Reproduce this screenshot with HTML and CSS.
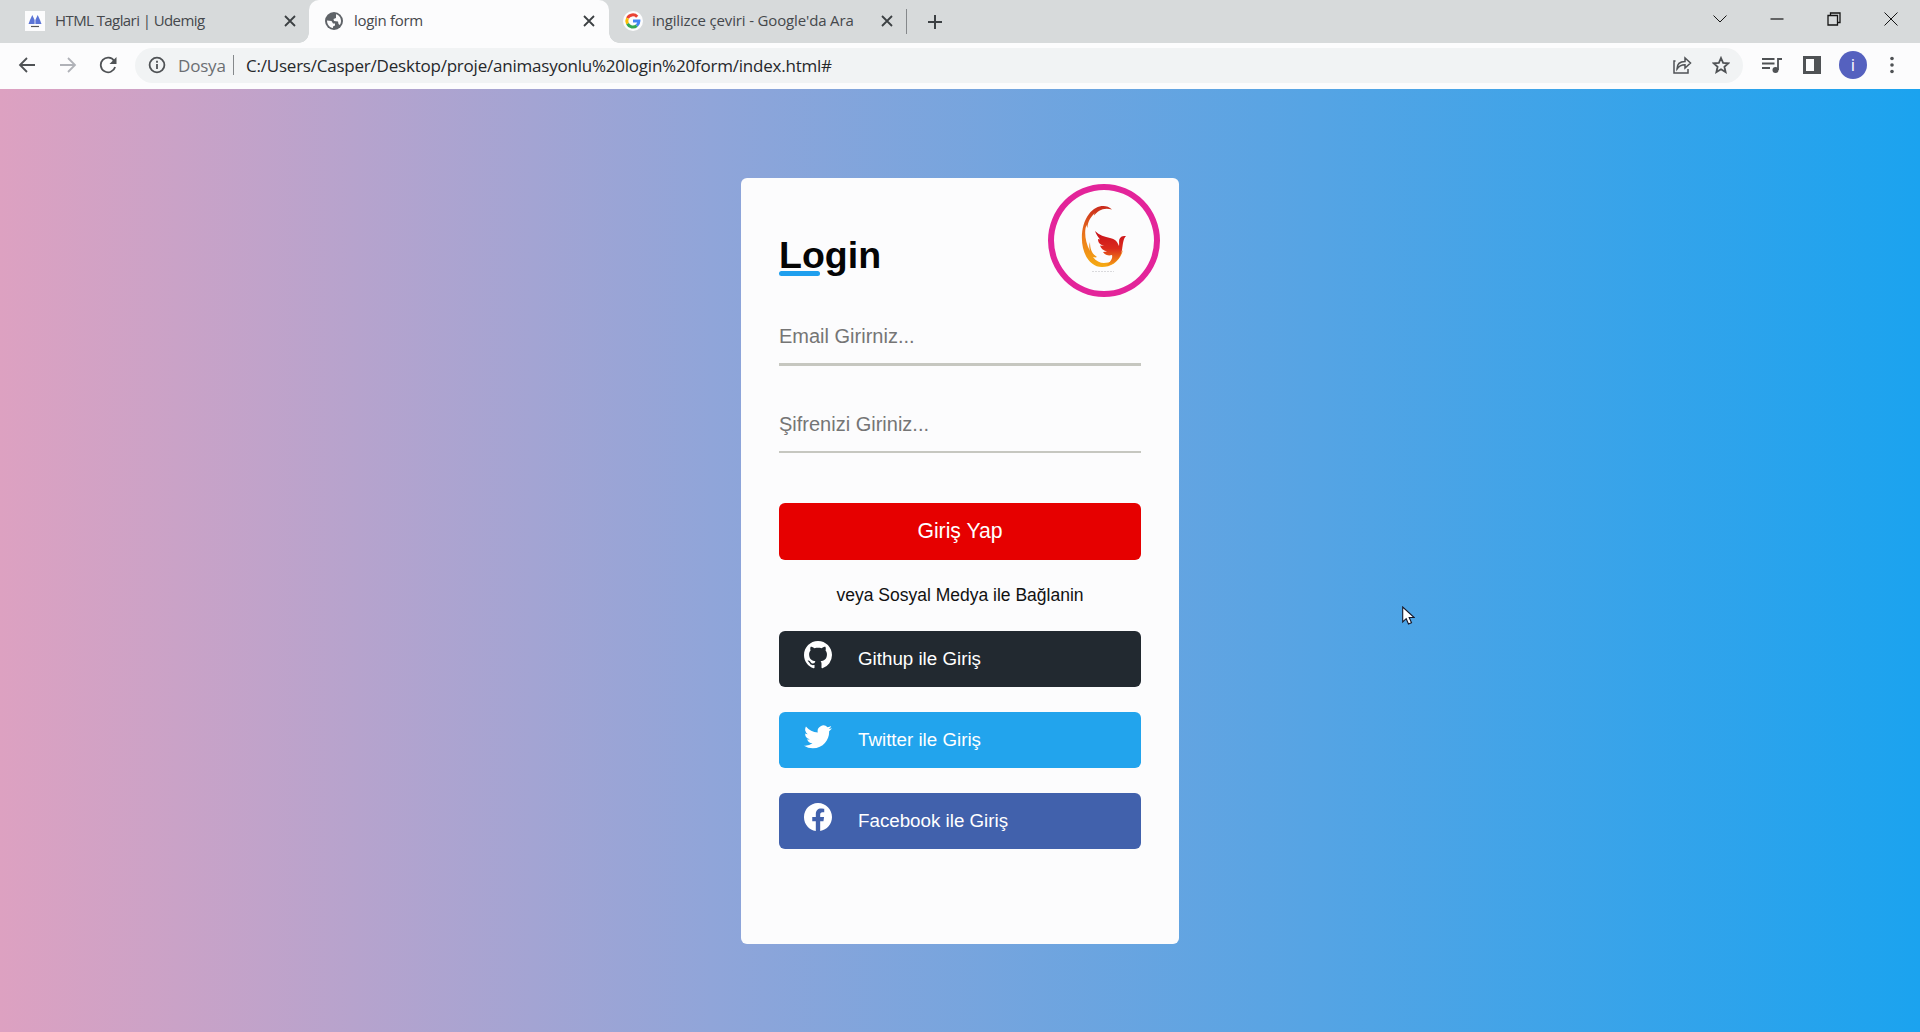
FILE: index.html
```html
<!DOCTYPE html>
<html lang="tr">
<head>
<meta charset="utf-8">
<title>login form</title>
<link rel="stylesheet" href="styles.css">
</head>
<body>
<header class="tabs">
  <div class="tab tab-first">
    <svg class="fav" width="20" height="20" viewBox="0 0 20 20"><path fill="#fcfcfd" d="M0 0h20v20H0z"/><path fill="#5b74d6" d="M3.500 13 5 9l2.300-5L9.600 9v4zM10.400 13V9l2.300-5L15 9l1.500 4z"/><path stroke="#555" stroke-width="1.200" d="M6 15.500h8"/></svg>
    <span class="title t1">HTML Taglari | Udemig</span>
    <svg class="x" width="12" height="12" viewBox="0 0 12 12"><path d="m1 1 10 10M11 1 1 11"/></svg>
  </div>
  <div class="tab tab-active">
    <svg class="fav" width="18" height="18" viewBox="0 0 18 18"><circle cx="9" cy="9" r="9" fill="#5f6368"/><path fill="#fcfcfd" d="M2 8.500 6.500 9l1.500 2.500h2v2l-2 1v1.500C4.500 15.500 2 12.500 2 8.500zM11 2.300c3 .7 5 3.500 5 6.700 0 1.500-.5 3-1.300 4l-1.200-1-.5-2.500-4-.5-.5-2L11 6z"/></svg>
    <span class="title t2">login form</span>
    <svg class="x" width="12" height="12" viewBox="0 0 12 12"><path d="m1 1 10 10M11 1 1 11"/></svg>
  </div>
  <div class="tab tab-last">
    <svg class="fav" width="20" height="20" viewBox="0 0 20 20"><circle cx="10" cy="10" r="10" fill="#fcfcfd"/><g fill="none" stroke-width="3"><path stroke="#ea4335" d="M4.500 7.200A6 6 0 0 1 14.200 5.700"/><path stroke="#fbbc05" d="M4.500 7.200a6 6 0 0 0 0 5.600"/><path stroke="#34a853" d="M4.500 12.800a6 6 0 0 0 9.300 1.800"/><path stroke="#4285f4" d="M13.800 14.600A6 6 0 0 0 15.900 10H10"/></g></svg>
    <span class="title t3">ingilizce çeviri - Google'da Ara</span>
    <svg class="x" width="12" height="12" viewBox="0 0 12 12"><path d="m1 1 10 10M11 1 1 11"/></svg>
  </div>
  <svg class="plus" width="14" height="14" viewBox="0 0 14 14"><path d="M7 0v14M0 7h14"/></svg>
  <div class="window-buttons">
    <svg width="14" height="14" viewBox="0 0 14 14"><path d="m.5 3.500 6.500 6.500 6.500-6.500"/></svg>
    <svg width="14" height="14" viewBox="0 0 14 14"><path stroke-width="1.200" d="M.5 7h13"/></svg>
    <svg width="14" height="14" viewBox="0 0 14 14"><path stroke-width="1.300" d="M1 3.500h9.500V13H1zM3.500 3V1H13v9.500h-2"/></svg>
    <svg width="14" height="14" viewBox="0 0 14 14"><path d="m.5.500 13 13m0-13-13 13"/></svg>
  </div>
</header>
<nav class="toolbar">
  <svg class="back" width="18" height="18" viewBox="0 0 18 18"><path d="M17 9H2m7-7L2 9l7 7"/></svg>
  <svg class="forward" width="18" height="18" viewBox="0 0 18 18"><path d="M1 9h15M9 2l7 7-7 7"/></svg>
  <svg class="reload" width="18" height="18" viewBox="0 0 18 18"><path d="M15.200 5A7.300 7.300 0 1 0 16.100 11"/><path fill="#4f5255" stroke="none" d="M17.500 1v7h-7z"/></svg>
  <div class="address">
    <svg width="18" height="18" viewBox="0 0 18 18"><circle cx="9" cy="9" r="7.400"/><path d="M9 8v5M9 4.800v2"/></svg>
    <span class="scheme">Dosya</span><span class="bar"></span>
    <span class="url">C:/Users/Casper/Desktop/proje/animasyonlu%20login%20form/index.html#</span>
    <svg class="share" width="20" height="20" viewBox="0 0 20 20"><path d="M3.500 6H2v12h14v-4M5 14c0-5 3-7.500 8-7.500V3l5.500 5-5.500 5v-3.200c-3.500 0-6 1-8 4.200z"/></svg>
    <svg width="18" height="18" viewBox="0 0 18 18"><path d="m9 2 2.100 4.900 5.300.4-4 3.500 1.200 5.200L9 13.200 4.400 16l1.200-5.200-4-3.500 5.300-.4z"/></svg>
  </div>
  <svg class="media" width="20" height="18" viewBox="0 0 20 18"><path d="M0 3h12.500M0 7.500h12.500M0 12h8M16 14V3h4"/><circle cx="13.500" cy="14" r="3" fill="#4f5255" stroke="none"/></svg>
  <svg class="panel" width="18" height="18" viewBox="0 0 18 18"><path fill="#4f5255" stroke="none" d="M0 0h18v18H0zM3 3v12h8V3z" fill-rule="evenodd"/></svg>
  <span class="avatar">i</span>
  <svg class="more" width="4" height="18" viewBox="0 0 4 18"><g fill="#4f5255" stroke="none"><circle cx="2" cy="2.500" r="1.800"/><circle cx="2" cy="9" r="1.800"/><circle cx="2" cy="15.500" r="1.800"/></g></svg>
</nav>
<main class="page">
  <form class="card">
    <div class="logo">
      <svg width="50" height="70" viewBox="0 0 50 70">
        <defs>
          <linearGradient id="flame" x1="0" y1="0" x2="0" y2="1"><stop offset="0" stop-color="#c92a1d"/><stop offset=".5" stop-color="#ec7a1c"/><stop offset="1" stop-color="#f5ab12"/></linearGradient>
          <linearGradient id="bird" x1="0" y1="0" x2="0" y2="1"><stop offset="0" stop-color="#c8101c"/><stop offset=".5" stop-color="#db2a1c"/><stop offset="1" stop-color="#f59b14"/></linearGradient>
        </defs>
        <path fill="url(#flame)" d="M33 4.500C27-1 17 0 10 9 3 18 1.500 32 4 43c3 12 10 19 19 19 10 0 18-6 21-17-5 8-12 13-19 13-4 0-8-2-11-6 2 .5 3 .5 4 0-5-3-7-8-7-15-1 3-1 6 0 9C6 37 5 26 7.500 20c.3 1.500.5 2 1 3 0-6 3-11 7.500-15-1 1-1 2-1 2.500C19 6 24 2 33 4.500z"/>
        <path fill="url(#bird)" d="M16 26c4 4 10 6 15 7 5 1 7 3 9 8 .5-4-1-6 2-9 1-1 2-1 5-1-3 3-3 8-4 14-1 8-8 15-16 16 4-4 7-7 6-11-4 1-7 0-9-3l4-.5c-4-1-6-3-7-6l4 .5c-5-2-6-4-6-7l2 .5C19 32 17 29 16 26z"/>
        <path stroke="#d9d9dc" stroke-dasharray="2 1" d="M13 66.500h22"/>
      </svg>
    </div>
    <h1>Login</h1>
    <input class="focus" type="text" placeholder="Email Girirniz...">
    <input type="password" placeholder="Şifrenizi Giriniz...">
    <button type="button">Giriş Yap</button>
    <p><span>veya Sosyal Medya ile Bağlanin</span></p>
    <a class="social github"><svg width="28" height="28" viewBox="0 0 16 16"><path d="M8 0C3.580 0 0 3.580 0 8c0 3.540 2.290 6.530 5.470 7.590.4.070.55-.17.55-.38 0-.19-.01-.82-.01-1.490-2.010.37-2.530-.49-2.690-.94-.09-.23-.48-.94-.82-1.130-.28-.15-.68-.52-.01-.53.63-.01 1.080.58 1.230.82.72 1.210 1.870.87 2.330.66.07-.52.28-.87.51-1.070-1.780-.2-3.640-.89-3.640-3.950 0-.87.31-1.590.82-2.150-.08-.2-.36-1.020.08-2.120 0 0 .67-.21 2.200.82.64-.18 1.320-.27 2-.27s1.360.09 2 .27c1.530-1.040 2.200-.82 2.200-.82.44 1.100.16 1.920.08 2.120.51.56.82 1.270.82 2.150 0 3.070-1.870 3.750-3.650 3.950.29.25.54.73.54 1.480 0 1.070-.01 1.930-.01 2.200 0 .21.15.46.55.38A8.010 8.010 0 0 0 16 8c0-4.420-3.580-8-8-8z"/></svg><span>Githup ile Giriş</span></a>
    <a class="social twitter"><svg width="28" height="28" viewBox="0 0 16 16"><path d="M5.026 15c6.038 0 9.341-5.003 9.341-9.334 0-.14 0-.282-.006-.422A6.685 6.685 0 0 0 16 3.542a6.658 6.658 0 0 1-1.889.518 3.301 3.301 0 0 0 1.447-1.817 6.533 6.533 0 0 1-2.087.793A3.286 3.286 0 0 0 7.875 6.030a9.325 9.325 0 0 1-6.767-3.429 3.289 3.289 0 0 0 1.018 4.382A3.323 3.323 0 0 1 .64 6.575v.045a3.288 3.288 0 0 0 2.632 3.218 3.203 3.203 0 0 1-.865.115 3.230 3.230 0 0 1-.614-.057 3.283 3.283 0 0 0 3.067 2.277A6.588 6.588 0 0 1 .78 13.580a6.320 6.320 0 0 1-.78-.045A9.344 9.344 0 0 0 5.026 15z"/></svg><span>Twitter ile Giriş</span></a>
    <a class="social facebook"><svg width="28" height="28" viewBox="0 0 16 16"><path d="M16 8.049c0-4.446-3.582-8.050-8-8.050C3.580 0-.002 3.603-.002 8.050c0 4.017 2.926 7.347 6.750 7.951v-5.625h-2.030V8.050H6.750V6.275c0-2.017 1.195-3.131 3.022-3.131.876 0 1.791.157 1.791.157v1.980h-1.009c-.993 0-1.303.621-1.303 1.258v1.510h2.218l-.354 2.326H9.250V16c3.824-.604 6.750-3.934 6.750-7.951z"/></svg><span>Facebook ile Giriş</span></a>
  </form>
</main>
<svg class="cursor" width="13" height="20" viewBox="0 0 13 20"><path fill="#fff" stroke="#15182a" stroke-width="1.100" d="M.7 1v15l3.500-3.300L6.500 18l3-1.300L7.200 11.500h5z"/></svg>
</body>
</html>
```
FILE: styles.css
```css
* { box-sizing: border-box; }
body { margin: 0; height: 1032px; display: flex; flex-direction: column; overflow: hidden; background: #fcfcfd; font-family: "Liberation Sans", Arial, sans-serif; }
svg { flex: none; fill: none; }

/* Browser tabs */
.tabs { height: 43px; background: #d7dadb; display: flex; align-items: center; font-family: "Open Sans", "Noto Sans", sans-serif; }
.tab { height: 43px; display: flex; align-items: center; padding-bottom: 1px; }
.tab-first { width: 309px; padding-left: 25px; padding-right: 13px; }
.tab-active { width: 300px; padding-left: 16px; padding-right: 14px; background: #fcfcfd; border-radius: 10px 10px 0 0; position: relative; }
.tab-active::before, .tab-active::after { content: ""; position: absolute; bottom: 0; width: 10px; height: 10px; }
.tab-active::before { left: -10px; background: radial-gradient(circle at 0 0, #d7dadb 9.5px, #fcfcfd 10px); }
.tab-active::after { right: -10px; background: radial-gradient(circle at 100% 0, #d7dadb 9.5px, #fcfcfd 10px); }
.tab-last { width: 298px; padding-left: 14px; padding-right: 14px; position: relative; }
.tab-last::after { content: ""; position: absolute; right: 0; top: 9px; width: 1px; height: 25px; background: #85888b; }
.title { font-size: 15px; color: #45484c; white-space: nowrap; line-height: 20px; padding-bottom: 2px; margin-left: 10px; margin-right: auto; }
.t1 { letter-spacing: -0.58px; }
.t2 { letter-spacing: -0.3px; margin-left: 11px; }
.t3 { letter-spacing: -0.15px; margin-left: 9px; }
.x path { stroke: #3c4043; stroke-width: 1.8; }
.plus { margin-left: 21px; }
.plus path { stroke: #3c4043; stroke-width: 2; }
.window-buttons { margin-left: auto; display: flex; gap: 43px; padding-right: 22px; padding-bottom: 6px; }
.window-buttons path { stroke: #151515; }

/* Toolbar */
.toolbar { height: 46px; display: flex; align-items: center; padding: 0 21px 2px 18px; }
.toolbar path, .toolbar circle { stroke: #4f5255; stroke-width: 1.8; }
.toolbar .share path { stroke-width: 1.5; }
.toolbar .forward path { stroke: #b0b2b8; }
.forward { margin-left: 23px; }
.reload { margin-left: 22px; }
.toolbar .reload path + path, .toolbar .panel path, .toolbar g circle, .toolbar .media circle { stroke: none; }
.address { width: 1608px; height: 35px; margin-left: 18px; border-radius: 18px; background: #f1f3f4; display: flex; align-items: center; padding: 0 13px; font-family: "Open Sans", "Noto Sans", sans-serif; font-size: 17px; }
.scheme { margin-left: 12px; color: #6b6e72; width: 47px; letter-spacing: -0.2px; }
.bar { width: 1px; height: 20px; margin: 0 12px 0 8px; background: #85888b; }
.url { color: #26282b; margin-right: auto; white-space: nowrap; letter-spacing: -0.22px; }
.share { margin-right: 20px; }
.media { margin-left: 19px; }
.panel { margin-left: 21px; }
.avatar { width: 28px; height: 28px; margin-left: 18px; border-radius: 50%; background: #5561bf; color: #fff; font: 17px/27px "Open Sans", sans-serif; text-align: center; }
.more { margin-left: auto; margin-right: 5px; }

/* Page */
.page { flex: 1; display: flex; align-items: center; justify-content: center; background: linear-gradient(90deg, #dda1c1 0%, #90a5d9 37%, #1ba3ef 100%); }
.card { width: 438px; height: 766px; padding: 52px 38px 0; border-radius: 6px; background: #fcfcfd; position: relative; display: flex; flex-direction: column; }
.logo { position: absolute; right: 19px; top: 6px; width: 112px; height: 113px; border: 6px solid #e3249a; border-radius: 50%; display: flex; justify-content: center; padding-top: 15px; }
h1 { margin: 0; font-size: 37.5px; line-height: 50px; position: relative; color: #050505; }
h1::after { content: ""; position: absolute; left: 0; bottom: 4px; width: 41px; height: 5px; border-radius: 3px; background: #1f9fee; }
input { width: 362px; height: 60px; margin: 27px 0 0; padding: 6px 0 0; border: 0; border-bottom: 2px solid #c6c7c0; background: none; outline: 0; font: 20px "Liberation Sans", Arial, sans-serif; }
input::placeholder { color: #757575; opacity: 1; }
.focus { margin-top: 26px; padding-top: 5px; border-bottom-width: 3px; }
button { height: 57px; margin: 50px 0 0; padding: 0; border: 0; border-radius: 6px; background: #e60000; color: #fff; font: 21.2px "Liberation Sans", Arial, sans-serif; }
p { margin: 25px 0 25px; font-size: 17.5px; line-height: 21px; text-align: center; color: #111; }
.social { height: 56px; flex: none; margin-bottom: 25px; border-radius: 6px; display: flex; padding-left: 25px; color: #fff; font-size: 18.75px; line-height: 56px; }
.social svg { margin-top: 10px; margin-right: 26px; fill: #fff; }
.github { background: #222930; }
.twitter { background: #22a4ed; }
.facebook { background: #4161ac; }
.cursor { position: absolute; left: 1402px; top: 606px; }
```
